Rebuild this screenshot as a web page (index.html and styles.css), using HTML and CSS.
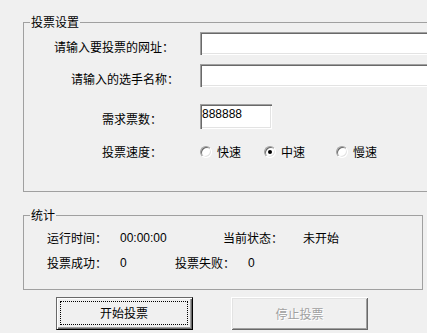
FILE: index.html
```html
<!DOCTYPE html>
<html lang="zh-CN">
<head>
<meta charset="utf-8">
<title>投票</title>
<link rel="stylesheet" href="styles.css">
</head>
<body>
<div class="app">
  <fieldset class="group group-settings">
    <legend>投票设置</legend>
    <div class="row row-url">
      <label class="lbl lbl-url">请输入要投票的网址：</label>
      <input class="field field-wide" type="text">
    </div>
    <div class="row row-name">
      <label class="lbl lbl-name">请输入的选手名称：</label>
      <input class="field field-wide" type="text">
    </div>
    <div class="row row-count">
      <label class="lbl lbl-short">需求票数：</label>
      <input class="field field-num" type="text" value="888888">
    </div>
    <div class="row row-speed">
      <span class="lbl lbl-short">投票速度：</span>
      <div class="radios">
        <label class="opt"><input type="radio" name="speed" class="radio">快速</label>
        <label class="opt"><input type="radio" name="speed" class="radio" checked>中速</label>
        <label class="opt"><input type="radio" name="speed" class="radio">慢速</label>
      </div>
    </div>
  </fieldset>

  <fieldset class="group group-stats">
    <legend>统计</legend>
    <div class="stat stat-1">
      <span>运行时间：</span><span class="val">00:00:00</span><span>当前状态：</span><span>未开始</span>
    </div>
    <div class="stat stat-2">
      <span>投票成功：</span><span class="val">0</span><span>投票失败：</span><span class="val">0</span>
    </div>
  </fieldset>

  <div class="actions">
    <button class="btn btn-default" type="button"><span class="focus">开始投票</span></button>
    <button class="btn btn-disabled" type="button" disabled>停止投票</button>
  </div>
</div>
</body>
</html>
```
FILE: styles.css
```css
html, body {
  margin: 0;
  padding: 0;
  overflow: hidden;
  background: #f0f0f0;
}
body {
  font-family: "Noto Sans CJK SC", "Liberation Sans", sans-serif;
  font-size: 12px;
  line-height: 14px;
  color: #000;
}
.app {
  width: 427px;
  height: 333px;
  padding-top: 15px;
  box-sizing: border-box;
  overflow: hidden;
}
.group {
  margin: 0 0 0 23px;
  padding: 0;
  border: 1px solid #a0a0a0;
  min-width: 0;
  box-sizing: border-box;
}
.group legend {
  margin-left: 6px;
  padding: 0 1px;
  line-height: 14px;
}
.group-settings {
  width: 430px;
  padding-bottom: 32px;
}
.row {
  display: grid;
  grid-template-columns: 176px auto;
  align-items: start;
}
.lbl {
  margin-top: 8px;
  white-space: nowrap;
}
.lbl-url { padding-left: 30px; }
.lbl-name { padding-left: 47px; }
.lbl-short { padding-left: 78px; }
.row-url { margin-top: 3px; }
.row-name { margin-top: 9px; }
.row-count { margin-top: 17px; }
.row-speed { margin-top: 16px; }
.row-speed .lbl { margin-top: 0; }

.field {
  border: none;
  margin: 0;
  background: #fff;
  box-shadow: inset 1px 1px #a0a0a0, inset 2px 2px #696969, inset -1px -1px #fff, inset -2px -2px #e3e3e3;
  font-family: "Liberation Sans", sans-serif;
  font-size: 12px;
  outline: none;
  box-sizing: border-box;
}
.field-wide {
  width: 240px;
  height: 23px;
}
.field-num {
  width: 72px;
  height: 25px;
  padding: 0 2px 5px 2px;
  color: #000;
}

.radios {
  display: grid;
  grid-template-columns: 64px 72px auto;
}
.opt {
  display: flex;
  align-items: center;
  gap: 5px;
}
.radio {
  appearance: none;
  -webkit-appearance: none;
  margin: 0;
  width: 12px;
  height: 12px;
  border-radius: 50%;
  border: 1px solid;
  border-color: #a0a0a0 #fff #fff #a0a0a0;
  background: #fff;
  box-shadow: inset 1px 1px #696969, inset -1px -1px #e3e3e3;
  box-sizing: border-box;
  display: grid;
  place-items: center;
}
.radio:checked::before {
  content: "";
  width: 4px;
  height: 4px;
  border-radius: 50%;
  background: #000;
}

.group-stats {
  width: 400px;
  margin-top: 16px;
  padding-bottom: 19px;
}
.stat {
  display: grid;
  padding-left: 23px;
  white-space: nowrap;
}
.stat-1 {
  margin-top: 9px;
  grid-template-columns: 73px 103px 80px auto;
}
.stat-2 {
  margin-top: 11px;
  grid-template-columns: 73px 55px 73px auto;
}
.val {
  font-family: "Liberation Sans", sans-serif;
}

.actions {
  display: flex;
  gap: 38px;
  padding-left: 56px;
  margin-top: 7px;
}
.btn {
  width: 137px;
  height: 33px;
  margin: 0;
  padding: 0;
  background: #f0f0f0;
  font: inherit;
  box-sizing: border-box;
}
.btn-default {
  border: 1px solid;
  border-color: #696969 #000 #000 #696969;
  box-shadow: inset 1px 1px #fff, inset -1px -1px #696969, inset -2px -2px #a0a0a0;
  padding: 3px 4px 4px 3px;
  color: #000;
}
.btn-default .focus {
  display: flex;
  align-items: center;
  justify-content: center;
  height: 100%;
  border: 1px dotted #000;
  box-sizing: border-box;
}
.btn-disabled {
  border: none;
  box-shadow: inset 1px 1px #fff, inset -1px -1px #696969, inset 2px 2px #e3e3e3, inset -2px -2px #a0a0a0;
  color: #a0a0a0;
  text-shadow: 1px 1px #fff;
}
```
